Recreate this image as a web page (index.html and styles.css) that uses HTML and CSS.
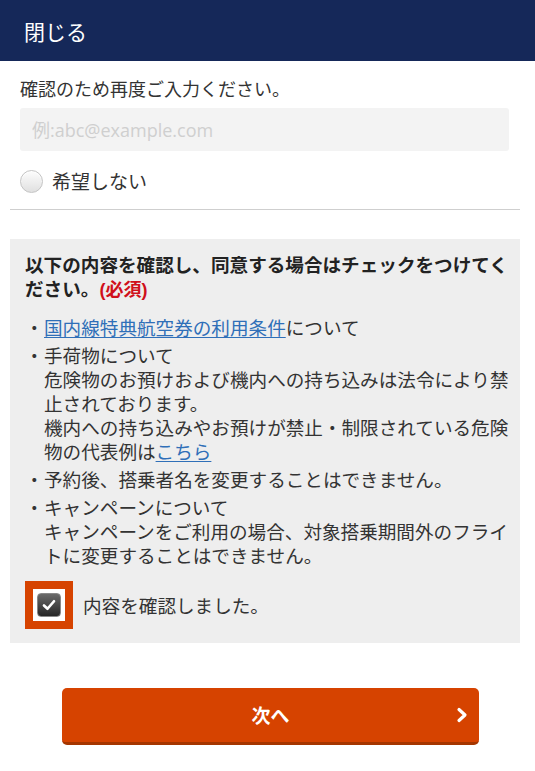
FILE: index.html
```html
<!DOCTYPE html>
<html lang="ja">
<head>
<meta charset="utf-8">
<title>確認</title>
<link rel="stylesheet" href="styles.css">
</head>
<body>
<header class="topbar"><span class="close">閉じる</span></header>
<main class="page">
  <section class="form">
    <p class="label">確認のため再度ご入力ください。</p>
    <input class="email" type="text" placeholder="例:abc@example.com">
    <label class="radio-row"><span class="radio"></span><span class="radio-text">希望しない</span></label>
  </section>
  <hr class="sep">
  <section class="agree">
    <p class="agree-title">以下の内容を確認し、同意する場合はチェックをつけてく<br>ださい。<span class="req">(必須)</span></p>
    <ul class="terms">
      <li><span class="dot">・</span><span class="body"><a class="link" href="#">国内線特典航空券の利用条件</a>について</span></li>
      <li><span class="dot">・</span><span class="body">手荷物について<br>危険物のお預けおよび機内への持ち込みは法令により禁<br>止されております。<br>機内への持ち込みやお預けが禁止・制限されている危険<br>物の代表例は<a class="link" href="#">こちら</a></span></li>
      <li><span class="dot">・</span><span class="body">予約後、搭乗者名を変更することはできません。</span></li>
      <li><span class="dot">・</span><span class="body">キャンペーンについて<br>キャンペーンをご利用の場合、対象搭乗期間外のフライ<br>トに変更することはできません。</span></li>
    </ul>
    <label class="check-row">
      <span class="check-frame"><span class="check-well"><span class="check-box"><svg viewBox="0 0 24 24" width="24" height="24"><path d="M6 12.5 L10.2 16.5 L18 7.5" fill="none" stroke="#fff" stroke-width="3.2" stroke-linecap="round" stroke-linejoin="round"/></svg></span></span></span>
      <span class="check-text">内容を確認しました。</span>
    </label>
  </section>
  <div class="actions">
    <button class="next" type="button"><span class="next-text">次へ</span><svg class="chev" viewBox="0 0 12 16" width="12" height="16"><path d="M3 2.5 L9 8 L3 13.5" fill="none" stroke="#fff" stroke-width="3.2" stroke-linecap="round" stroke-linejoin="round"/></svg></button>
  </div>
</main>
</body>
</html>
```
FILE: styles.css
```css
* { box-sizing: border-box; }
html, body { margin: 0; padding: 0; background: #fff; }
body {
  font-family: "Noto Sans CJK JP", "Noto Sans", sans-serif;
  color: #333;
  width: 535px;
}
.topbar {
  height: 61px;
  background: #152859;
  display: flex;
  align-items: center;
  padding-left: 24px;
}
.close {
  color: #fff;
  font-size: 21px;
  line-height: 24px;
}
.page {
  padding: 0 15px 0 10px;
}
.form {
  padding: 15px 11px 0 10px;
}
.label {
  margin: 0 0 8px;
  font-size: 18px;
  line-height: 24px;
  color: #333;
}
.email {
  display: block;
  width: 100%;
  height: 43px;
  border: none;
  border-radius: 3px;
  background: #f3f3f3;
  padding: 0 12px;
  font-family: "Open Sans", "Noto Sans CJK JP", sans-serif;
  font-size: 18px;
  color: #333;
  outline: none;
}
.email::placeholder { color: #cfcfcf; }
.radio-row {
  display: flex;
  align-items: center;
  gap: 9px;
  margin-top: 18px;
  height: 24px;
}
.radio {
  width: 23px;
  height: 23px;
  border-radius: 50%;
  border: 1px solid #c4c4c4;
  background: linear-gradient(#fdfdfd, #e0e0e0);
  box-shadow: inset 0 1px 1px #fff;
}
.radio-text {
  font-size: 19px;
  line-height: 24px;
  color: #333;
}
.sep {
  margin: 16px 0 29px;
  border: none;
  border-top: 1px solid #cfcfcf;
  height: 0;
}
.agree {
  background: #eeeeee;
  padding: 13px 4px 14px 15px;
}
.agree-title {
  margin: 0;
  font-size: 18.6px;
  line-height: 24px;
  font-weight: bold;
  color: #222;
}
.req {
  color: #d0101b;
  font-family: "Liberation Sans", "Noto Sans CJK JP", sans-serif;
  font-size: 18px;
}
.terms {
  list-style: none;
  margin: 13px 0 0;
  padding: 0;
  display: flex;
  flex-direction: column;
  gap: 4px;
}
.terms li {
  display: flex;
  font-size: 18.6px;
  line-height: 24px;
  color: #333;
}
.dot { flex: 0 0 19px; }
.body { white-space: nowrap; }
.link {
  color: #2f6fb8;
  text-decoration: underline;
  text-underline-offset: 2px;
}
.check-row {
  display: flex;
  align-items: center;
  gap: 10px;
  margin-top: 14px;
}
.check-frame {
  width: 48px;
  height: 48px;
  background: #d64300;
  padding: 8px;
  display: flex;
}
.check-well {
  flex: 1;
  background: #fff;
  padding: 4px;
  display: flex;
}
.check-box {
  flex: 1;
  border-radius: 4px;
  background: linear-gradient(#6a6a6a, #262626);
  border: 1px solid #888;
  display: flex;
  align-items: center;
  justify-content: center;
}
.check-box svg { width: 20px; height: 20px; }
.check-text {
  font-size: 18.6px;
  line-height: 24px;
  color: #333;
}
.actions {
  margin-top: 45px;
  padding-left: 52px;
}
.next {
  position: relative;
  width: 417px;
  height: 57px;
  border: none;
  border-bottom: 3px solid #a53600;
  border-radius: 5px;
  background: #d64300;
  display: flex;
  align-items: center;
  justify-content: center;
  font-family: "Noto Sans CJK JP", sans-serif;
  cursor: pointer;
  padding: 0;
}
.next-text {
  color: #fff;
  font-weight: bold;
  font-size: 19px;
  line-height: 24px;
}
.chev {
  position: absolute;
  right: 11px;
  top: 19px;
}
```
